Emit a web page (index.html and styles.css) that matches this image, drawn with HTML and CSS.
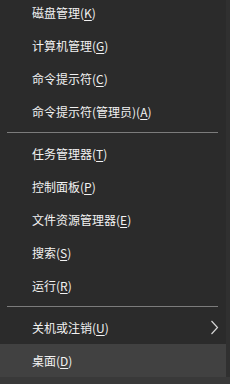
FILE: index.html
```html
<!DOCTYPE html>
<html lang="zh-CN">
<head>
<meta charset="utf-8">
<link rel="stylesheet" href="styles.css">
</head>
<body>
<div class="menu">
  <div class="group">
    <div class="item">磁盘管理(<u>K</u>)</div>
    <div class="item">计算机管理(<u>G</u>)</div>
    <div class="item">命令提示符(<u>C</u>)</div>
    <div class="item">命令提示符(管理员)(<u>A</u>)</div>
  </div>
  <div class="sep"></div>
  <div class="group">
    <div class="item">任务管理器(<u>T</u>)</div>
    <div class="item">控制面板(<u>P</u>)</div>
    <div class="item">文件资源管理器(<u>E</u>)</div>
    <div class="item">搜索(<u>S</u>)</div>
    <div class="item">运行(<u>R</u>)</div>
  </div>
  <div class="sep"></div>
  <div class="group">
    <div class="item has-sub">
      <span>关机或注销(<u>U</u>)</span>
      <svg class="chev" width="9" height="15" viewBox="0 0 9 15"><polyline points="1.5,1 7.5,7.5 1.5,14" fill="none" stroke="#d6d6d6" stroke-width="1.2"/></svg>
    </div>
    <div class="item active">桌面(<u>D</u>)</div>
  </div>
</div>
</body>
</html>
```

FILE: styles.css
```css
html, body {
  margin: 0;
  padding: 0;
}
body {
  width: 230px;
  height: 384px;
  overflow: hidden;
  background: #393939;
  font-family: "Noto Sans CJK SC", "Microsoft YaHei", sans-serif;
  font-size: 12px;
  color: #f2f2f2;
}
.menu {
  margin-top: -4px;
  width: 226px;
  background: #2b2b2b;
  border-right: 4px solid #303030;
  display: flex;
  flex-direction: column;
}
.group {
  display: flex;
  flex-direction: column;
}
.item {
  height: 33px;
  display: flex;
  align-items: center;
  padding-left: 32px;
  box-sizing: border-box;
  white-space: nowrap;
  line-height: 1;
}
.item u {
  text-decoration: underline;
  text-underline-offset: 2px;
  text-decoration-thickness: 1px;
}
.has-sub {
  justify-content: space-between;
  padding-right: 7px;
}
.chev {
  display: block;
}
.active {
  background: #414141;
}
.sep {
  height: 9px;
  display: flex;
  flex-direction: column;
  padding: 4px 8px 0 7px;
  box-sizing: border-box;
}
.sep::before {
  content: "";
  display: block;
  height: 1px;
  background: #7c7c7c;
}
```
